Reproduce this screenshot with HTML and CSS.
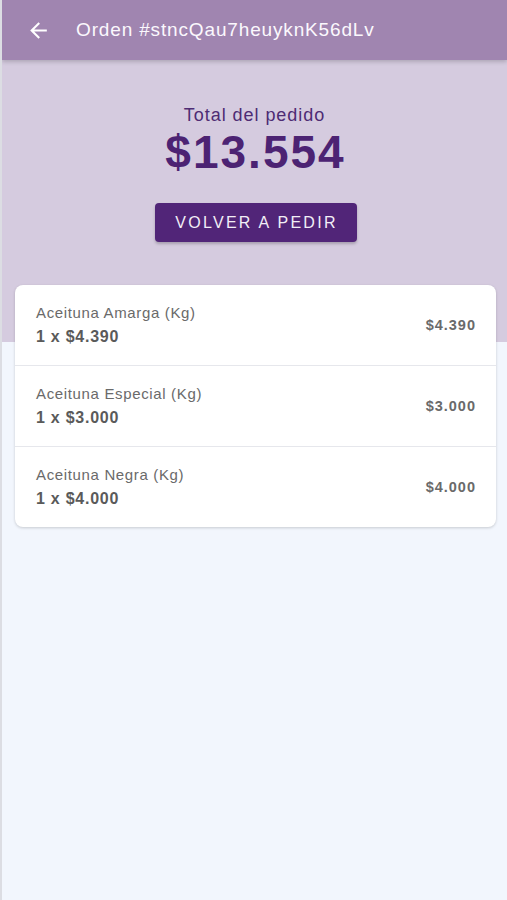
FILE: index.html
```html
<!DOCTYPE html>
<html lang="es">
<head>
<meta charset="utf-8">
<title>Orden</title>
<link rel="stylesheet" href="styles.css">
</head>
<body>
<div class="screen">
  <header class="appbar">
    <svg class="back" width="24" height="24" viewBox="0 0 24 24"><path d="M20 11H7.83l5.59-5.59L12 4l-8 8 8 8 1.41-1.41L7.83 13H20v-2z" fill="#fff"/></svg>
    <span class="title">Orden #stncQau7heuyknK56dLv</span>
  </header>
  <section class="hero">
    <div class="label">Total del pedido</div>
    <div class="total">$13.554</div>
    <button class="btn">VOLVER A PEDIR</button>
  </section>
  <main class="content">
    <div class="card">
      <div class="row">
        <div class="info"><div class="name">Aceituna Amarga (Kg)</div><div class="qty">1 x $4.390</div></div>
        <div class="price">$4.390</div>
      </div>
      <div class="row">
        <div class="info"><div class="name">Aceituna Especial (Kg)</div><div class="qty">1 x $3.000</div></div>
        <div class="price">$3.000</div>
      </div>
      <div class="row">
        <div class="info"><div class="name">Aceituna Negra (Kg)</div><div class="qty">1 x $4.000</div></div>
        <div class="price">$4.000</div>
      </div>
    </div>
  </main>
</div>
</body>
</html>
```
FILE: styles.css
```css
* { box-sizing: border-box; }
html, body { margin: 0; padding: 0; }
body {
  font-family: "Liberation Sans", Arial, sans-serif;
  background: #f2f6fd;
}
.screen {
  width: 507px;
  height: 900px;
  background: #f2f6fd;
  border-left: 2px solid #dcdde3;
  display: flex;
  flex-direction: column;
  position: relative;
  overflow: hidden;
}
.appbar {
  height: 60px;
  flex: none;
  background: #a085b0;
  display: flex;
  align-items: center;
  padding-left: 24px;
  gap: 25px;
  box-shadow: 0 2px 4px rgba(0,0,0,0.18);
  position: relative;
  z-index: 2;
}
.back { width: 25px; height: 25px; }
.title {
  color: #fbf8fd;
  font-size: 19px;
  letter-spacing: 0.85px;
}
.hero {
  background: #d5cbdf;
  height: 282px;
  flex: none;
  display: flex;
  flex-direction: column;
  align-items: center;
  padding-top: 45px;
}
.label {
  color: #4e2c74;
  font-size: 18px;
  line-height: 20px;
  letter-spacing: 0.95px;
}
.total {
  color: #4c2373;
  font-size: 46px;
  font-weight: bold;
  line-height: 44px;
  margin-top: 5px;
  letter-spacing: 2px;
  margin-left: 2px;
}
.btn {
  margin-top: 29px;
  width: 202px;
  height: 39px;
  background: #512578;
  color: #f2eef6;
  border: none;
  border-radius: 4px;
  font-family: "Liberation Sans", Arial, sans-serif;
  font-size: 16px;
  letter-spacing: 2.3px;
  box-shadow: 0 2px 3px rgba(0,0,0,0.22);
  padding: 0 0 0 2px;
  margin-left: 2px;
}
.content {
  flex: 1;
  margin-top: -57px;
  padding: 0 11px 0 13px;
  position: relative;
}
.card {
  background: #fff;
  border-radius: 8px;
  box-shadow: 0 1px 3px rgba(0,0,0,0.18);
  overflow: hidden;
}
.row {
  height: 81px;
  display: flex;
  align-items: center;
  justify-content: space-between;
  padding: 0 20px 0 21px;
  border-top: 1px solid #e6e7ec;
}
.row:first-child { border-top: none; height: 80px; }
.info { display: flex; flex-direction: column; gap: 5px; margin-top: 0; }
.name {
  color: #6a6a6a;
  font-size: 15px;
  line-height: 18px;
  letter-spacing: 0.65px;
}
.qty {
  color: #5a5a5a;
  font-size: 16px;
  font-weight: bold;
  line-height: 19px;
  letter-spacing: 0.75px;
}
.price {
  color: #6a6a6a;
  font-size: 14.5px;
  font-weight: bold;
  margin-top: -1px;
  letter-spacing: 1px;
}
```
